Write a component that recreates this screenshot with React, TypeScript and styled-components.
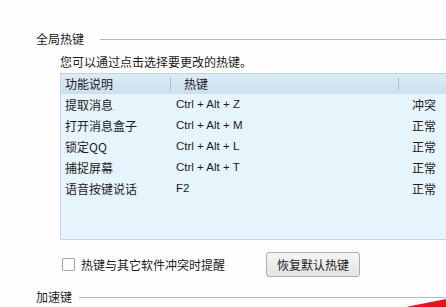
import React from "react";
import styled, { createGlobalStyle } from "styled-components";

const Global = createGlobalStyle`
  html, body { margin: 0; padding: 0; background: #fefefe; }
  body { font-family: "Noto Sans CJK SC", "Microsoft YaHei", sans-serif; font-size: 12px; color: #1b1b1b; }
`;

const Page = styled.div`
  position: relative;
  width: 446px;
  height: 307px;
  overflow: hidden;
  padding: 30px 0 0 36px;
  box-sizing: border-box;
`;

const SectionHead = styled.div<{ $gap: number }>`
  display: flex;
  align-items: center;
  height: 18px;
  gap: ${(p) => p.$gap}px;
`;

const SectionTitle = styled.span`
  font-size: 12px;
  line-height: 18px;
  white-space: nowrap;
`;

const Rule = styled.div`
  flex: 1;
  height: 1px;
  background: #a9bccd;
`;

const Body = styled.div`
  padding-left: 24px;
`;

const Hint = styled.div`
  margin-top: 6px;
  line-height: 16px;
  height: 16px;
`;

const ListBox = styled.div`
  margin-top: 3px;
  width: 420px;
  height: 167px;
  background: #e6f4fc;
  border: 1px solid #c3d5e3;
  border-right: none;
  box-sizing: border-box;
`;

const Grid = styled.div`
  display: grid;
  grid-template-columns: 109px 228px 1fr;
`;

const HeadCell = styled.div<{ $divider?: boolean }>`
  height: 20px;
  line-height: 20px;
  padding-left: ${(p) => (p.$divider ? 14 : 4)}px;
  background: linear-gradient(#dcebf7, #cbdfef);
  position: relative;
  &::before {
    content: "";
    display: ${(p) => (p.$divider ? "block" : "none")};
    position: absolute;
    left: 0;
    top: 4px;
    bottom: 4px;
    width: 1px;
    background: #a8bed0;
  }
`;

const Cell = styled.div<{ $pad: number; $latin?: boolean }>`
  height: 21px;
  line-height: 21px;
  padding-left: ${(p) => p.$pad}px;
  white-space: nowrap;
  font-family: ${(p) =>
    p.$latin ? '"Liberation Sans", "Noto Sans CJK SC", sans-serif' : '"Noto Sans CJK SC", sans-serif'};
  font-size: ${(p) => (p.$latin ? 11.5 : 12)}px;
`;

const Options = styled.div`
  display: flex;
  align-items: center;
  margin-top: 12px;
  height: 25px;
`;

const CheckLabel = styled.label`
  display: flex;
  align-items: center;
  gap: 6px;
  width: 204px;
  padding-left: 2px;
`;

const Box = styled.span`
  width: 11px;
  height: 11px;
  border: 1px solid #a6a6a6;
  background: #fdfdfd;
  border-radius: 1px;
`;

const Button = styled.button`
  width: 94px;
  height: 25px;
  font-family: "Noto Sans CJK SC", sans-serif;
  font-size: 12px;
  color: #1b1b1b;
  background: linear-gradient(#f6f6f6, #e4e4e4);
  border: 1px solid #acacac;
  border-radius: 3px;
  padding: 0;
`;

const BottomHead = styled.div`
  margin-top: 11px;
`;

const Swoosh = styled.svg`
  position: absolute;
  right: 0;
  bottom: 0;
`;

const rows = [
  ["提取消息", "Ctrl + Alt + Z", "冲突"],
  ["打开消息盒子", "Ctrl + Alt + M", "正常"],
  ["锁定QQ", "Ctrl + Alt + L", "正常"],
  ["捕捉屏幕", "Ctrl + Alt + T", "正常"],
  ["语音按键说话", "F2", "正常"],
];

export default function App() {
  return (
    <Page>
      <Global />
      <SectionHead $gap={16}>
        <SectionTitle>全局热键</SectionTitle>
        <Rule />
      </SectionHead>
      <Body>
        <Hint>您可以通过点击选择要更改的热键。</Hint>
        <ListBox>
          <Grid>
            <HeadCell>功能说明</HeadCell>
            <HeadCell $divider>热键</HeadCell>
            <HeadCell $divider />
            {rows.map(([a, b, c]) => (
              <React.Fragment key={a}>
                <Cell $pad={4}>{a}</Cell>
                <Cell $pad={6} $latin>
                  {b}
                </Cell>
                <Cell $pad={14}>{c}</Cell>
              </React.Fragment>
            ))}
          </Grid>
        </ListBox>
        <Options>
          <CheckLabel>
            <Box />
            热键与其它软件冲突时提醒
          </CheckLabel>
          <Button>恢复默认热键</Button>
        </Options>
      </Body>
      <BottomHead>
        <SectionHead $gap={7}>
          <SectionTitle>加速键</SectionTitle>
          <Rule />
        </SectionHead>
      </BottomHead>
      <Swoosh width="40" height="9" viewBox="0 0 40 9">
        <path d="M0 9 L40 1 L40 9 Z" fill="#e8131b" />
      </Swoosh>
    </Page>
  );
}
